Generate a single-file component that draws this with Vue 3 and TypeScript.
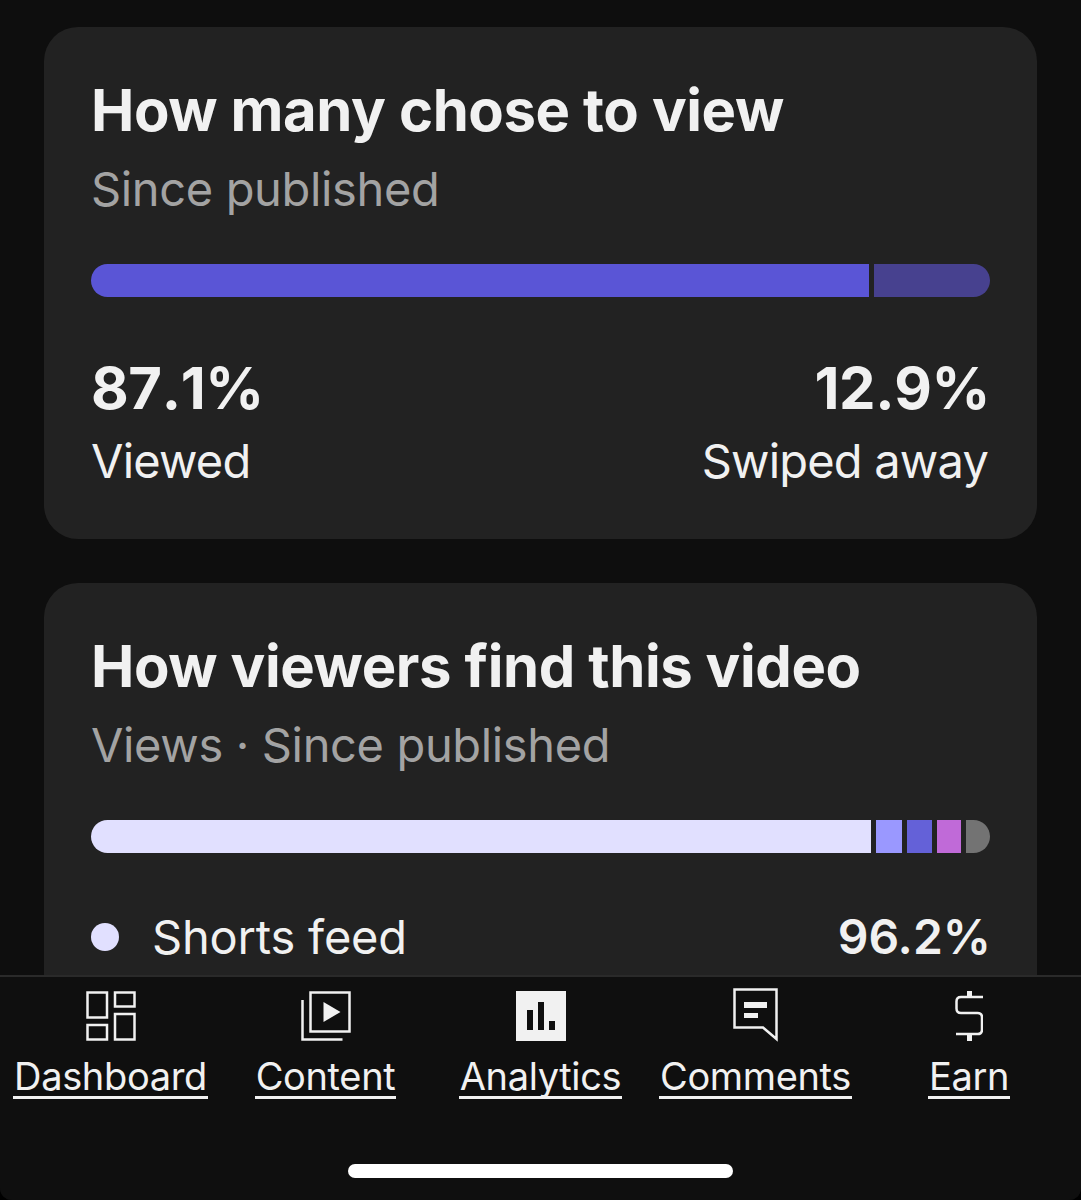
<script setup lang="ts">
interface Segment {
  color: string;
  width: number;
}

const viewSegments: Segment[] = [
  { color: "#5a55d6", width: 778 },
  { color: "#47418f", width: 116 },
];

const sourceSegments: Segment[] = [
  { color: "#e1e0ff", width: 780 },
  { color: "#9a98ff", width: 26 },
  { color: "#6461d8", width: 25 },
  { color: "#c06ad8", width: 24 },
  { color: "#737373", width: 25 },
];

const tabs = ["Dashboard", "Content", "Analytics", "Comments", "Earn"];
</script>

<template>
  <div class="screen">
    <main class="content">
      <section class="card">
        <h2 class="title">How many chose to view</h2>
        <p class="subtitle">Since published</p>
        <div class="bar">
          <span
            v-for="seg in viewSegments"
            :key="seg.color"
            class="segment"
            :style="{ background: seg.color, width: seg.width + 'px' }"
          ></span>
        </div>
        <div class="stats">
          <div class="stat">
            <strong>87.1%</strong>
            <span>Viewed</span>
          </div>
          <div class="stat right">
            <strong>12.9%</strong>
            <span>Swiped away</span>
          </div>
        </div>
      </section>

      <section class="card">
        <h2 class="title">How viewers find this video</h2>
        <p class="subtitle">Views · Since published</p>
        <div class="bar">
          <span
            v-for="seg in sourceSegments"
            :key="seg.color"
            class="segment"
            :style="{ background: seg.color, width: seg.width + 'px' }"
          ></span>
        </div>
        <div class="legend-row">
          <span class="dot"></span>
          <span class="legend-label">Shorts feed</span>
          <span class="legend-value">96.2%</span>
        </div>
      </section>
    </main>

    <nav class="tabs">
      <a v-for="(tab, i) in tabs" :key="tab" class="tab" href="#">
        <svg v-if="i === 0" class="icon" viewBox="0 0 50 50" fill="none" stroke="#f1f1f1" stroke-width="2.5">
          <rect x="1.5" y="1.5" width="19.500" height="25" />
          <rect x="29" y="1.5" width="19.500" height="14" />
          <rect x="1.5" y="34" width="19.500" height="14.500" />
          <rect x="29" y="23" width="19.500" height="25.500" />
        </svg>
        <svg v-else-if="i === 1" class="icon" viewBox="0 0 50 50" fill="none" stroke="#f1f1f1" stroke-width="2.5">
          <rect x="9.500" y="1.500" width="39" height="39" />
          <path d="M1.500 9v39.500h40" />
          <path d="M22.500 11v20l17-10z" fill="#f1f1f1" stroke="none" />
        </svg>
        <svg v-else-if="i === 2" class="icon" viewBox="0 0 50 50">
          <path
            fill="#f1f1f1"
            fill-rule="evenodd"
            d="M0 0h50v50H0zM11 19v20h6V19zM22 11v28h6V11zM33 30v9h6v-9z"
          />
        </svg>
        <svg v-else-if="i === 3" class="icon comment" viewBox="0 0 46 54" fill="none" stroke="#f1f1f1" stroke-width="2.5">
          <path d="M1.500 1.500h42v49.500L30 39.500H1.500z" />
          <path d="M11 14h23v6H11zM11 25h14v5H11z" fill="#f1f1f1" stroke="none" />
        </svg>
        <svg v-else class="icon dollar" viewBox="0 0 28 50" fill="none" stroke="#f1f1f1" stroke-width="2.500">
          <path d="M14.500 0v6M14.500 43v7" stroke-width="5" />
          <path d="M28 6H6Q1.500 6 1.500 10.500v7Q1.500 22 6 22h16.500Q27 22 27 26.500v12Q27 43 22.500 43H1" />
        </svg>
        <span class="tab-label">{{ tab }}</span>
      </a>
    </nav>

    <div class="home-area">
      <span class="home-indicator"></span>
    </div>
  </div>
</template>

<style>
html,
body {
  margin: 0;
  background: #000;
}
</style>

<style scoped>
.screen {
  width: 1081px;
  height: 1200px;
  display: flex;
  flex-direction: column;
  overflow: hidden;
  background: #0e0e0e;
  border-radius: 0 0 12px 12px;
  font-family: Inter, "Liberation Sans", sans-serif;
  color: #f1f1f1;
}

.content {
  flex: 1;
  min-height: 0;
  overflow: hidden;
  padding: 27px 44px 0;
  display: flex;
  flex-direction: column;
  gap: 44px;
}

.card {
  flex-shrink: 0;
  background: #222222;
  border-radius: 34px;
  padding: 47px 47px 48px;
}

.title {
  margin: 0;
  font-size: 58px;
  line-height: 72px;
  font-weight: 700;
  letter-spacing: -0.4px;
  white-space: nowrap;
}

.subtitle {
  margin: 13px 0 0;
  font-size: 47px;
  line-height: 60px;
  letter-spacing: -0.35px;
  color: #a3a3a3;
  white-space: nowrap;
}

.bar {
  display: flex;
  gap: 5px;
  width: 899px;
  height: 33px;
  margin-top: 45px;
  border-radius: 17px;
  overflow: hidden;
}

.segment {
  display: block;
  flex-shrink: 0;
  height: 100%;
}

.stats {
  display: flex;
  justify-content: space-between;
  width: 899px;
  margin-top: 55px;
}

.stat {
  display: flex;
  flex-direction: column;
  gap: 7px;
}

.stat.right {
  align-items: flex-end;
}

.stat.right span {
  margin-right: 2px;
}

.stat strong {
  font-size: 58px;
  line-height: 72px;
  font-weight: 700;
  font-kerning: none;
  letter-spacing: -0.4px;
}

.stat span {
  font-size: 47px;
  line-height: 60px;
  letter-spacing: -0.8px;
}

.legend-row {
  display: flex;
  align-items: center;
  width: 899px;
  margin-top: 54px;
}

.dot {
  width: 28px;
  height: 28px;
  border-radius: 50%;
  background: #e1e0ff;
  margin-right: 33px;
}

.legend-label {
  font-size: 47px;
  line-height: 60px;
  letter-spacing: -0.2px;
}

.legend-value {
  margin-left: auto;
  margin-right: -1px;
  font-size: 48px;
  line-height: 60px;
  font-weight: 600;
}

.tabs {
  flex-shrink: 0;
  display: grid;
  grid-template-columns: repeat(5, 215px);
  padding: 14px 3px 0;
  height: 118px;
  box-sizing: content-box;
  background: #0f0f0f;
  border-top: 2px solid #2a2a2a;
}

.tab {
  display: flex;
  flex-direction: column;
  align-items: center;
  color: #f1f1f1;
  text-decoration: none;
}

.tab:last-child {
  padding-right: 3px;
}

.icon {
  display: block;
  width: 50px;
  height: 50px;
}

.icon.comment {
  width: 46px;
  height: 54px;
  margin-top: -3px;
  margin-bottom: -1px;
}

.icon.dollar {
  width: 28px;
}

.tab-label {
  margin-top: 16px;
  padding: 0 1px;
  font-size: 38px;
  line-height: 39px;
  letter-spacing: -0.35px;
  border-bottom: 3px solid #f1f1f1;
  white-space: nowrap;
}

.home-area {
  flex-shrink: 0;
  height: 91px;
  background: #0f0f0f;
  display: flex;
  justify-content: center;
  align-items: flex-start;
}

.home-indicator {
  display: block;
  width: 385px;
  height: 14px;
  margin-top: 55px;
  border-radius: 7px;
  background: #ffffff;
}
</style>
